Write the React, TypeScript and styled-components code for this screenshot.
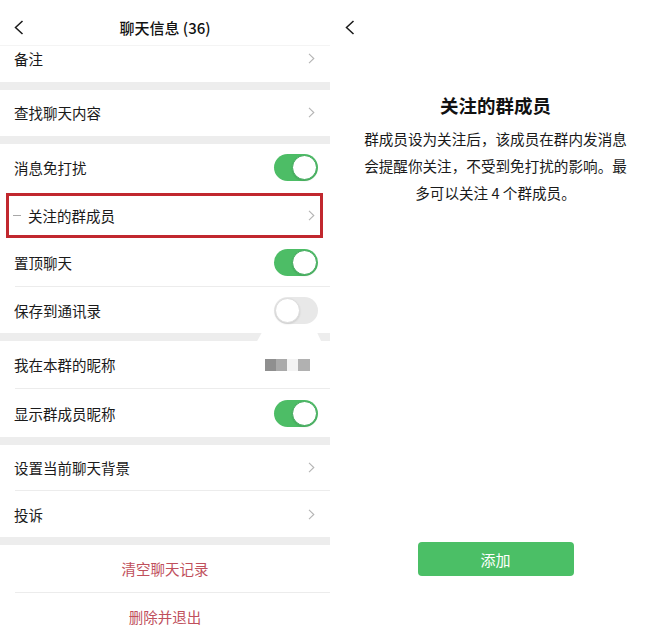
import React from 'react';
import styled, { createGlobalStyle, css } from 'styled-components';

const GlobalStyle = createGlobalStyle`
  html, body {
    margin: 0;
    padding: 0;
    background: #ffffff;
  }
  body {
    font-family: "Noto Sans CJK SC", "Noto Sans", sans-serif;
    color: #1a1a1a;
  }
`;

const Page = styled.div`
  display: flex;
  width: 646px;
  height: 640px;
  overflow: hidden;
  background: #ffffff;
`;

const LeftPanel = styled.div`
  width: 330px;
  flex-shrink: 0;
  display: flex;
  flex-direction: column;
`;

const RightPanel = styled.div`
  flex: 1;
  margin-left: 5px;
  padding: 0 0 64px 10px;
  display: flex;
  flex-direction: column;
`;

const Header = styled.div<{ $plain?: boolean }>`
  position: relative;
  height: 45px;
  box-sizing: border-box;
  padding-top: 10px;
  display: flex;
  align-items: center;
  justify-content: center;
  font-size: 15px;
  font-weight: 500;
  color: #111;
  box-shadow: ${(p) => (p.$plain ? 'none' : '0 1px 0 #f4f4f4')};
`;

const BackButton = styled.div<{ $left: number }>`
  position: absolute;
  left: ${(p) => p.$left}px;
  top: 20px;
  width: 10px;
  height: 15px;
  display: flex;
`;

const Band = styled.div<{ $notch?: boolean }>`
  position: relative;
  height: 8px;
  background: #ededed;

  ${(p) =>
    p.$notch &&
    css`
      &::after {
        content: '';
        position: absolute;
        left: 256px;
        top: -4px;
        width: 66px;
        height: 14px;
        background: #ffffff;
        clip-path: polygon(0 100%, 12% 0, 90% 0, 100% 100%);
      }
    `}
`;

const Row = styled.div<{ $h: number; $pb?: number; $pr?: number }>`
  height: ${(p) => p.$h}px;
  box-sizing: border-box;
  padding: 0 ${(p) => p.$pr ?? 15}px ${(p) => p.$pb ?? 0}px 14px;
  display: flex;
  align-items: center;
  justify-content: space-between;
  font-size: 14.5px;
  color: #1a1a1a;
`;

const Separator = styled.div`
  height: 1px;
  margin-left: 15px;
  background: #ececec;
`;

const HighlightBox = styled.div`
  height: 45px;
  box-sizing: border-box;
  margin: 2px 7px 1px 6px;
  border: 3px solid #c1282e;
  padding: 0 5px 0 4px;
  display: flex;
  align-items: center;
  font-size: 14.5px;
  color: #1a1a1a;
`;

const Dash = styled.span`
  width: 8px;
  height: 1px;
  background: #a8a8a8;
  margin-right: 7px;
`;

const Label = styled.span`
  flex: 1;
`;

const ActionRow = styled.div<{ $h: number }>`
  height: ${(p) => p.$h}px;
  display: flex;
  align-items: center;
  justify-content: center;
  font-size: 14.5px;
  color: #c0505c;
`;

const Track = styled.div<{ $on: boolean }>`
  width: 44px;
  height: 27px;
  box-sizing: border-box;
  border-radius: 14px;
  padding: 1px;
  display: flex;
  justify-content: ${(p) => (p.$on ? 'flex-end' : 'flex-start')};
  background: ${(p) => (p.$on ? '#4dbd66' : '#e8e8e8')};
`;

const Knob = styled.div<{ $on: boolean }>`
  width: 25px;
  height: 25px;
  border-radius: 50%;
  background: #ffffff;
  box-sizing: border-box;
  border: 1px solid ${(p) => (p.$on ? '#3fa95a' : '#dcdcdc')};
  box-shadow: 0 1px 2px rgba(0, 0, 0, 0.12);
`;

const Blur = styled.div`
  display: flex;
  margin-right: 5px;
`;

const Pixel = styled.div<{ $c: string; $w: number }>`
  width: ${(p) => p.$w}px;
  height: 12px;
  background: ${(p) => p.$c};
`;

const Title = styled.div`
  margin-top: 47px;
  text-align: center;
  font-size: 18.5px;
  line-height: 26px;
  font-weight: 700;
  color: #111;
`;

const Description = styled.p`
  margin: 7px 0 0;
  text-align: center;
  font-size: 14.6px;
  line-height: 27px;
  color: #1a1a1a;
`;

const Spacer = styled.div`
  flex: 1;
`;

const AddButton = styled.button`
  align-self: center;
  width: 156px;
  height: 34px;
  border: none;
  border-radius: 4px;
  background: #4bbf66;
  color: #ffffff;
  font-family: inherit;
  font-size: 15px;
`;

const BackIcon = () => (
  <svg width="10" height="15" viewBox="0 0 10 15">
    <path d="M8.5 1 L1.5 7.5 L8.5 14" fill="none" stroke="#1a1a1a" strokeWidth="1.5" />
  </svg>
);

const Chevron = () => (
  <svg width="7" height="11" viewBox="0 0 7 11">
    <path d="M1 0.8 L5.8 5.5 L1 10.2" fill="none" stroke="#b4b4b4" strokeWidth="1.1" />
  </svg>
);

const Toggle = ({ on }: { on: boolean }) => (
  <Track $on={on}>
    <Knob $on={on} />
  </Track>
);

const App: React.FC = () => (
  <Page>
    <GlobalStyle />
    <LeftPanel>
      <Header>
        <BackButton $left={14}>
          <BackIcon />
        </BackButton>
        聊天信息 (36)
      </Header>
      <Row $h={37} $pb={10}>
        <Label>备注</Label>
        <Chevron />
      </Row>
      <Band />
      <Row $h={46} $pb={2}>
        <Label>查找聊天内容</Label>
        <Chevron />
      </Row>
      <Band />
      <Row $h={47} $pr={12}>
        <Label>消息免打扰</Label>
        <Toggle on />
      </Row>
      <HighlightBox>
        <Dash />
        <Label>关注的群成员</Label>
        <Chevron />
      </HighlightBox>
      <Row $h={47} $pr={12}>
        <Label>置顶聊天</Label>
        <Toggle on />
      </Row>
      <Separator />
      <Row $h={46} $pr={12}>
        <Label>保存到通讯录</Label>
        <Toggle on={false} />
      </Row>
      <Band $notch />
      <Row $h={47} $pr={15}>
        <Label>我在本群的昵称</Label>
        <Blur>
          <Pixel $c="#8f8f8f" $w={11} />
          <Pixel $c="#aaaaaa" $w={11} />
          <Pixel $c="#f3f3f3" $w={11} />
          <Pixel $c="#b1b1b1" $w={12} />
        </Blur>
      </Row>
      <Separator />
      <Row $h={48} $pr={12}>
        <Label>显示群成员昵称</Label>
        <Toggle on />
      </Row>
      <Band />
      <Row $h={45}>
        <Label>设置当前聊天背景</Label>
        <Chevron />
      </Row>
      <Separator />
      <Row $h={46}>
        <Label>投诉</Label>
        <Chevron />
      </Row>
      <Band />
      <ActionRow $h={47}>清空聊天记录</ActionRow>
      <Separator />
      <ActionRow $h={47}>删除并退出</ActionRow>
    </LeftPanel>

    <RightPanel>
      <Header $plain>
        <BackButton $left={0}>
          <BackIcon />
        </BackButton>
      </Header>
      <Title>关注的群成员</Title>
      <Description>
        群成员设为关注后，该成员在群内发消息
        <br />
        会提醒你关注，不受到免打扰的影响。最
        <br />
        多可以关注 4 个群成员。
      </Description>
      <Spacer />
      <AddButton>添加</AddButton>
    </RightPanel>
  </Page>
);

export default App;
